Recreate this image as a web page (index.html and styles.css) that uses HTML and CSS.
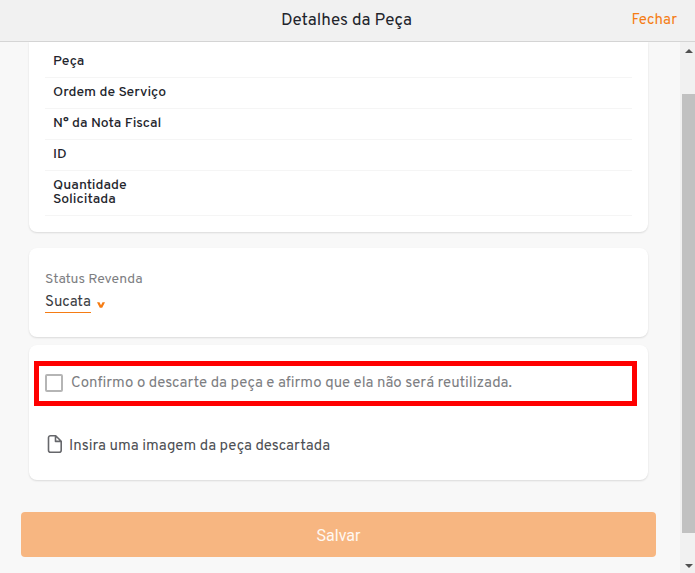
FILE: index.html
```html
<!DOCTYPE html>
<html lang="pt-BR">
<head>
  <meta charset="utf-8">
  <meta name="viewport" content="width=device-width, initial-scale=1">
  <title>Detalhes da Peça</title>
  <link rel="stylesheet" href="styles.css">
</head>
<body>
  <header class="topbar">
    <h1 class="topbar-title">Detalhes da Peça</h1>
    <button class="topbar-close" type="button">Fechar</button>
  </header>
  <div class="view">
    <main class="content">
      <section class="card card-details">
        <table class="details">
          <tbody>
            <tr><th scope="row">Peça</th><td></td></tr>
            <tr><th scope="row">Ordem de Serviço</th><td></td></tr>
            <tr><th scope="row">N° da Nota Fiscal</th><td></td></tr>
            <tr><th scope="row">ID</th><td></td></tr>
            <tr><th scope="row">Quantidade Solicitada</th><td></td></tr>
          </tbody>
        </table>
      </section>

      <section class="card card-status">
        <label class="status-label" for="status">Status Revenda</label>
        <div class="status-field">
          <select class="status-select" id="status">
            <option>Sucata</option>
          </select>
          <svg class="status-arrow" viewBox="0 0 8 6" aria-hidden="true"><path d="M0 0.2H2.5L4 3.2 5.5 0.2H8L5.2 5.8H2.8Z"/></svg>
        </div>
      </section>

      <section class="card card-confirm">
        <div class="confirm">
          <input class="confirm-box" type="checkbox" id="confirm">
          <label for="confirm">Confirmo o descarte da peça e afirmo que ela não será reutilizada.</label>
        </div>
        <button class="upload" type="button">
          <svg class="upload-icon" viewBox="0 0 16 20" aria-hidden="true"><path d="M3.5 1.7H8.7L14.2 7.2V16.3A2 2 0 0 1 12.2 18.3H3.5A2 2 0 0 1 1.5 16.3V3.7A2 2 0 0 1 3.5 1.7ZM8.5 1.9V7.4H14"/></svg>
          Insira uma imagem da peça descartada
        </button>
      </section>

      <button class="save" type="button">Salvar</button>
    </main>
    <div class="scrollbar" aria-hidden="true">
      <svg class="scroll-arrow" viewBox="0 0 8 4"><path d="M4 0L8 4H0Z"/></svg>
      <div class="scroll-track"><div class="scroll-thumb"></div></div>
      <svg class="scroll-arrow" viewBox="0 0 8 4"><path d="M0 0H8L4 4Z"/></svg>
    </div>
  </div>
</body>
</html>
```
FILE: styles.css
```css
* {
  box-sizing: border-box;
}

body {
  margin: 0;
  height: 100vh;
  display: flex;
  flex-direction: column;
  background: #f8f8f8;
  color: #22242b;
  font-family: Overpass, Roboto, "Liberation Sans", sans-serif;
  font-size: 15px;
}

button,
select {
  font: inherit;
  border: 0;
  padding: 0;
  background: none;
}

.topbar {
  display: grid;
  grid-template-columns: 1fr auto 1fr;
  align-items: center;
  padding: 11px 18px 10px 16px;
  line-height: 20px;
  background: #f1f1f1;
  border-bottom: 1px solid #d5d5d5;
}

.topbar-title {
  grid-column: 2;
  margin: 0;
  font-size: 17px;
  font-weight: 400;
}

.topbar-close {
  justify-self: end;
  color: #f57c14;
}

.view {
  flex: 1;
  min-height: 0;
  display: flex;
}

.content {
  flex: 1;
  padding: 0 24px 16px 21px;
}

.card {
  margin: 0 8px 8px;
  background: #fff;
  border-radius: 8px;
  box-shadow: 0 1px 2px rgba(0, 0, 0, 0.12);
}

.card-details {
  margin-bottom: 16px;
  padding: 5px 16px 16px;
  border-radius: 0 0 8px 8px;
}

.details {
  width: 100%;
  border-spacing: 0;
  table-layout: fixed;
  font-size: 14px;
  line-height: 14px;
}

.details th,
.details td {
  padding: 8px;
  border-bottom: 1px solid #f5f5f5;
  text-align: left;
  font-weight: 500;
}

.details th {
  width: 25%;
}

.card-status {
  padding: 22px 16px 24px;
}

.status-label {
  display: block;
  font-size: 14px;
  line-height: 20px;
  color: #7d7e82;
}

.status-field {
  display: flex;
  align-items: center;
  gap: 6px;
}

.status-select {
  appearance: none;
  field-sizing: content;
  height: 23px;
  padding-top: 2px;
  border-bottom: 1px solid #f57c14;
  border-radius: 0;
  color: #3a3c42;
}

.status-arrow {
  width: 8px;
  height: 6px;
  margin-top: 6px;
  fill: #f57c14;
}

.card-confirm {
  margin-bottom: 32px;
  padding: 16px 11px 20px 5px;
}

.confirm {
  display: flex;
  align-items: flex-start;
  gap: 8px;
  padding: 8px 6px;
  border: 5px solid #f00;
  line-height: 19px;
  color: #7d7e82;
}

.confirm-box {
  appearance: none;
  width: 18px;
  height: 18px;
  margin: 0;
  border: 2px solid #b5b5b5;
  border-radius: 2px;
}

.upload {
  display: flex;
  align-items: flex-start;
  gap: 6px;
  margin: 28px 0 0 13px;
  line-height: 26px;
  color: #4d4f54;
}

.upload-icon {
  width: 16px;
  height: 20px;
  fill: none;
  stroke: #66676b;
  stroke-width: 1.6;
  stroke-linejoin: round;
}

.save {
  display: block;
  width: 100%;
  padding: 13px 12px 11px;
  border-radius: 4px;
  background: #f7b681;
  color: #fff8f2;
  font-family: Roboto, "Liberation Sans", sans-serif;
  font-size: 16px;
  line-height: 21px;
}

.scrollbar {
  width: 15px;
  display: flex;
  flex-direction: column;
  align-items: center;
  padding: 7px 0 5px;
  background: #f1f1f1;
}

.scroll-arrow {
  width: 8px;
  height: 4px;
  margin-left: 2px;
  fill: #505050;
}

.scroll-track {
  flex: 1;
  align-self: stretch;
  padding: 41px 0 31px 2px;
}

.scroll-thumb {
  height: 100%;
  background: #c1c1c1;
}
```
